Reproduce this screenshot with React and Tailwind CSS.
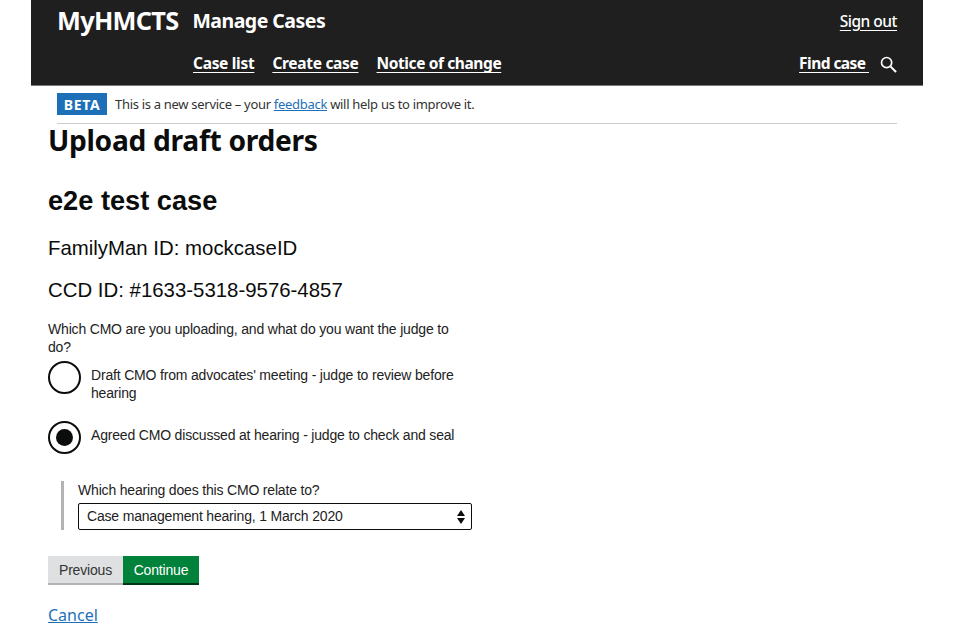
import React from "react";

const gds = { fontFamily: '"Noto Sans", sans-serif' };
const NAV = "font-['Noto_Sans',sans-serif] font-bold text-white underline underline-offset-[3px] text-[15.5px] tracking-[-0.3px] leading-none";

function Radio({ checked, children }) {
  return (
    <div className="flex items-start">
      <span className="w-[33px] h-[33px] shrink-0 rounded-full border-2 border-[#0b0c0c] flex items-center justify-center">
        {checked && <span className="w-[17px] h-[17px] rounded-full bg-[#0b0c0c]" />}
      </span>
      <span className="ml-[10px] pt-[5px] w-[372px] text-[14px] tracking-[-0.18px] leading-[18px] text-[#222]">{children}</span>
    </div>
  );
}

export default function App() {
  return (
    <div className="w-[960px] h-[640px] overflow-hidden bg-white font-['Liberation_Sans',sans-serif] text-[#0b0c0c]">
      <div className="ml-[31px] w-[892px]">
        <header className="h-[86px] bg-[#1f1f1f] border-b border-[#777] flex flex-col px-[26px]">
          <div className="flex items-center h-[42px] justify-between">
            <div className="flex items-center">
              <span className="font-['Noto_Sans',sans-serif] font-bold text-white text-[25.3px] tracking-[-0.7px] leading-none">MyHMCTS</span>
              <span className="ml-[14px] font-['Noto_Sans',sans-serif] font-bold text-white text-[19.5px] tracking-[-0.5px] leading-none">Manage Cases</span>
            </div>
            <span className="mt-[1px] font-['Noto_Sans',sans-serif] font-medium text-white underline underline-offset-[3px] text-[15.5px] tracking-[-0.5px] leading-none">Sign out</span>
          </div>
          <div className="flex items-center justify-between mt-[2px] h-[40px]">
            <div className="flex gap-[18px] ml-[136px]">
              <span className={NAV}>Case list</span>
              <span className={NAV}>Create case</span>
              <span className="font-['Noto_Sans',sans-serif] font-bold text-white underline underline-offset-[3px] text-[15.5px] tracking-[-0.4px] leading-none">Notice of change</span>
            </div>
            <div className="flex items-center gap-[11px]">
              <span className="font-['Noto_Sans',sans-serif] font-bold text-white underline underline-offset-[3px] text-[15.5px] tracking-[-0.55px] leading-none">Find case&nbsp;</span>
              <svg width="17" height="17" viewBox="0 0 18 18" fill="none" stroke="white" strokeWidth="1.8">
                <circle cx="7" cy="7" r="5.4" />
                <path d="M11 11l6 6" strokeWidth="2.2" />
              </svg>
            </div>
          </div>
        </header>
        <div className="mx-[26px] h-[38px] border-b border-[#ccc] flex items-start pt-[7px]">
          <span className="h-[22px] w-[50px] bg-[#1d70b8] text-white font-bold text-[14px] tracking-[0.6px] flex items-center justify-center" style={gds}>BETA</span>
          <span className="ml-[8px] text-[13px] tracking-[-0.3px] leading-[22px] text-[#333]" style={gds}>
            This is a new service – your <span className="text-[#1d70b8] underline">feedback</span> will help us to improve it.
          </span>
        </div>
      </div>
      <main className="pl-[48px]">
        <h1 className="font-['Noto_Sans',sans-serif] font-bold text-[28.2px] leading-[32px] tracking-[-0.3px]">Upload draft orders</h1>
        <h2 className="mt-[29px] font-bold text-[27.2px] leading-[32px]">e2e test case</h2>
        <p className="mt-[18px] text-[20.4px] leading-[26px]">FamilyMan ID: mockcaseID</p>
        <p className="mt-[16px] text-[20.4px] leading-[26px]">CCD ID: #1633-5318-9576-4857</p>
        <p className="mt-[17px] w-[420px] text-[14px] tracking-[-0.18px] leading-[18px] text-[#222]">Which CMO are you uploading, and what do you want the judge to do?</p>
        <div className="mt-[5px] flex flex-col gap-[19px]">
          <Radio>Draft CMO from advocates' meeting - judge to review before hearing</Radio>
          <Radio checked>Agreed CMO discussed at hearing - judge to check and seal</Radio>
        </div>
        <div className="mt-[27px] ml-[13px] pl-[14px] border-l-[3px] border-[#b1b4b6] w-[411px] h-[49px]">
          <p className="text-[14px] tracking-[-0.18px] leading-[18px] text-[#222]">Which hearing does this CMO relate to?</p>
          <div className="mt-[4px] h-[27px] w-[394px] border border-[#0b0c0c] rounded-[2px] flex items-center justify-between pl-[8px] pr-[6px] text-[14px] tracking-[-0.18px] text-[#222]">
            <span>Case management hearing, 1 March 2020</span>
            <svg width="8" height="14" viewBox="0 0 8 14" fill="#0b0c0c"><path d="M4 0l4 6H0zM4 14L0 8h8z" /></svg>
          </div>
        </div>
        <div className="mt-[26px] flex">
          <span className="h-[29px] w-[75px] pt-[2px] bg-[#dee0e2] border-b-2 border-[#b1b4b6] text-[14px] tracking-[-0.18px] text-[#333] flex items-center justify-center">Previous</span>
          <span className="h-[29px] w-[76px] pt-[2px] bg-[#00823b] border-b-2 border-[#003618] text-[14px] tracking-[-0.18px] text-white flex items-center justify-center">Continue</span>
        </div>
        <p className="mt-[18px] text-[16px] leading-[24px] text-[#1d70b8] underline" style={gds}>Cancel</p>
      </main>
    </div>
  );
}
